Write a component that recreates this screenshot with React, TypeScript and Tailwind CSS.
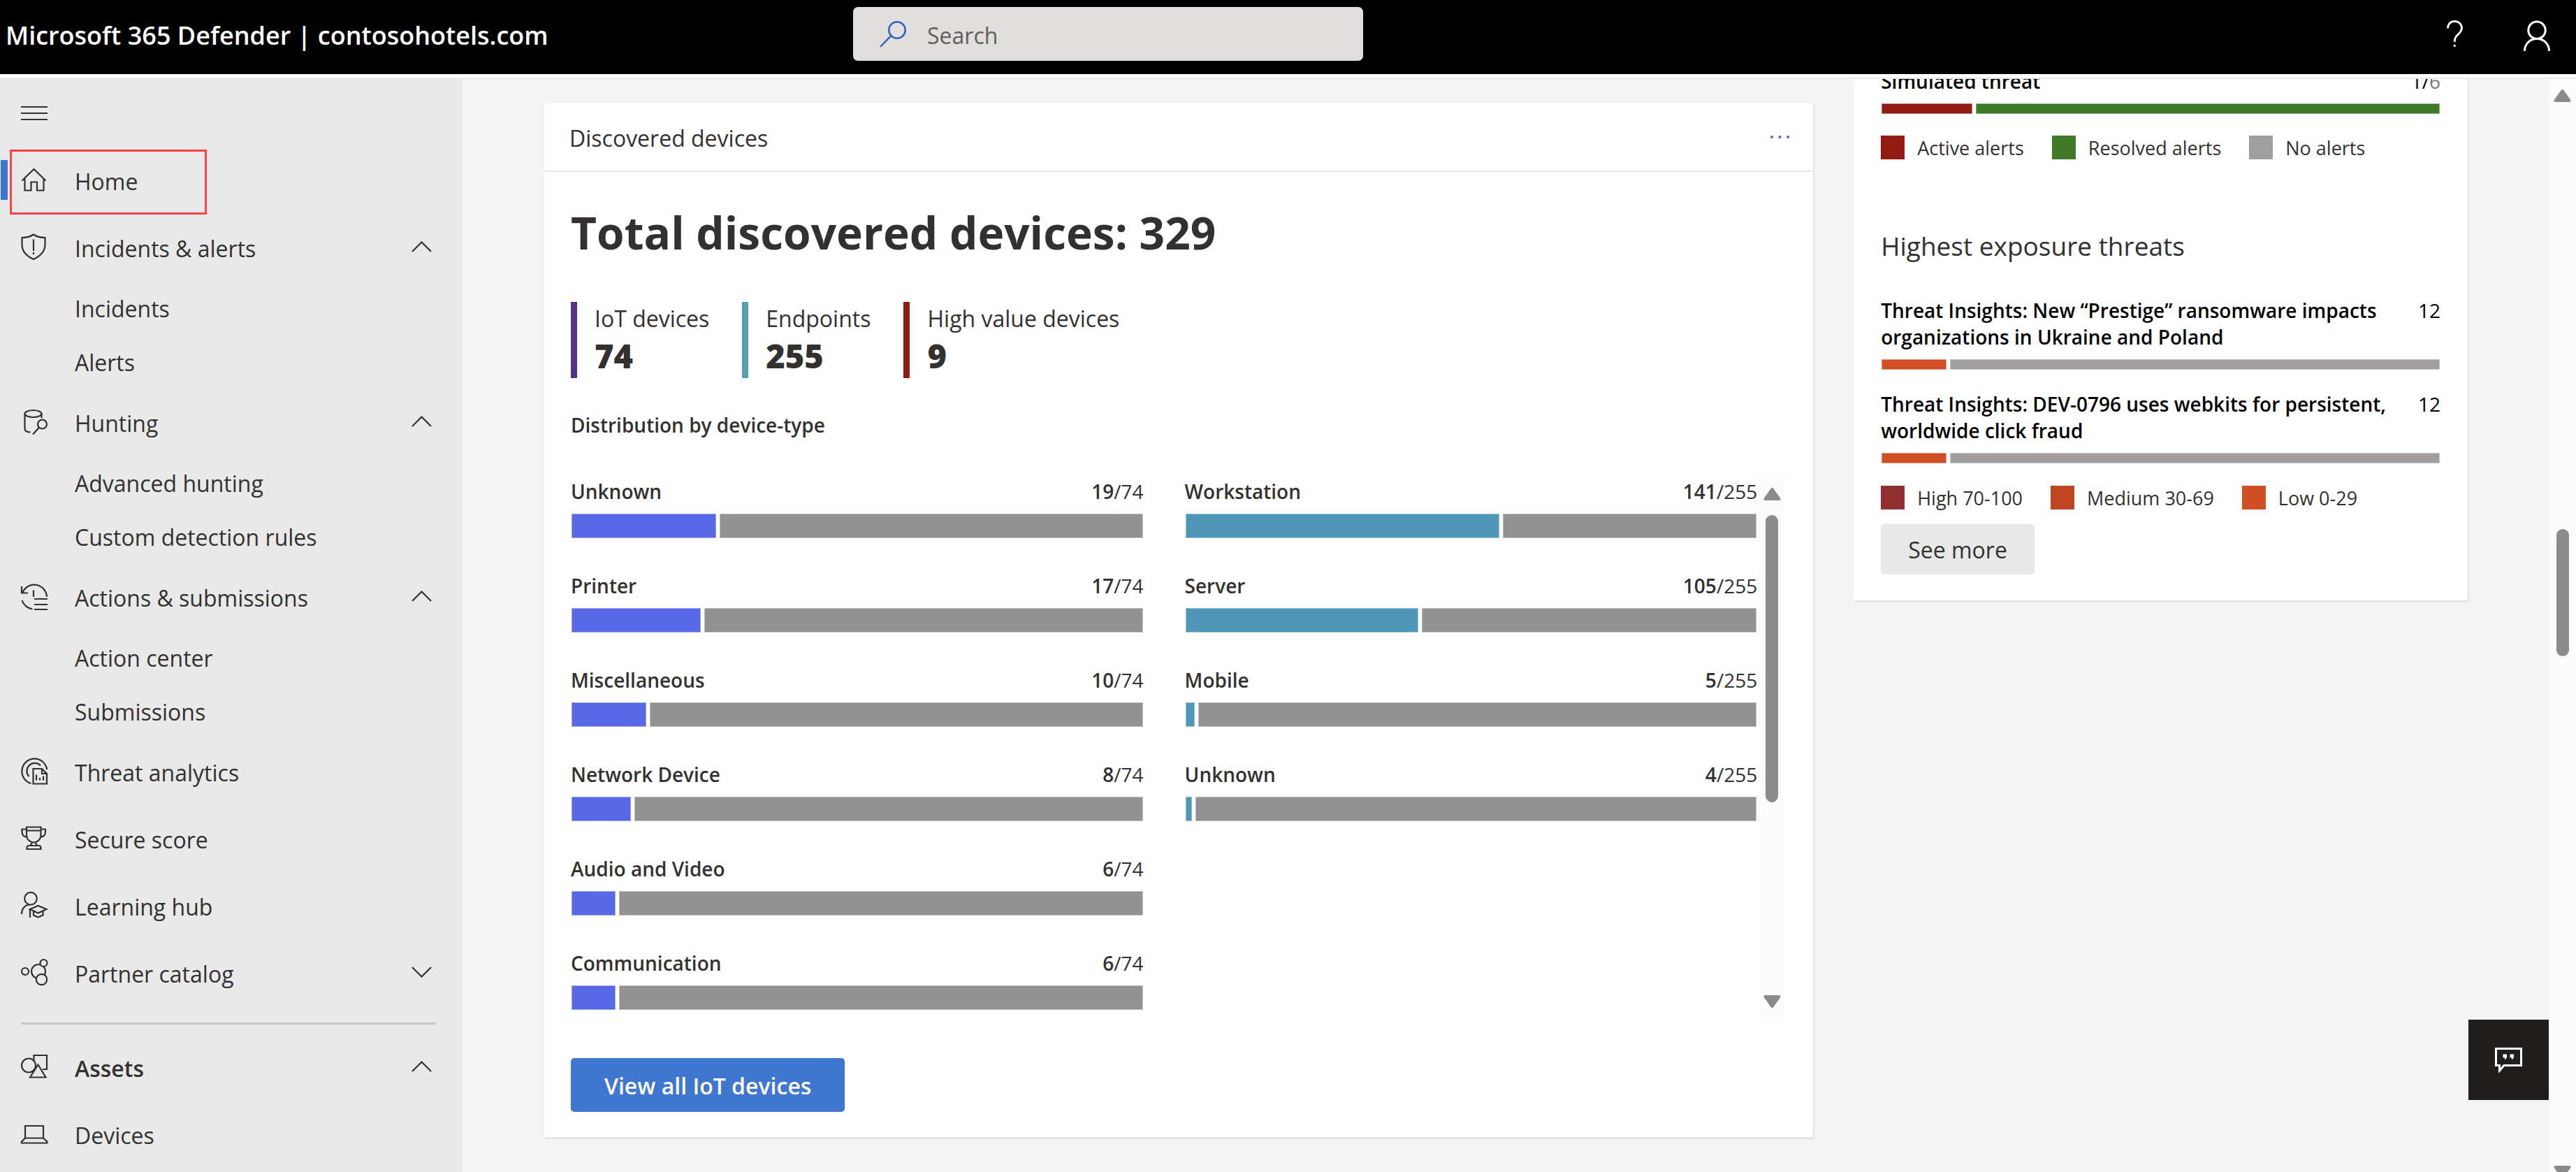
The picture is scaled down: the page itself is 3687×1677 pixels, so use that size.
import { type ReactNode } from 'react'

function Icon({ children }: { children: ReactNode }) {
  return (
    <svg
      viewBox="0 0 38 38"
      className="size-[38px] shrink-0 overflow-visible"
      fill="none"
      stroke="currentColor"
      strokeWidth="2.2"
      aria-hidden="true"
    >
      {children}
    </svg>
  )
}

const icons = {
  home: (
    <Icon>
      <path d="M1.500 19.500 18.500 3l17 16.500M5.500 16v17.500h9v-12h8.500v12h9.500V16" />
    </Icon>
  ),
  shield: (
    <Icon>
      <path d="M18 .5C14 3.500 8 5 1.500 5v10C1.500 25 8 31.500 18 36c9.500-4.500 16.500-11 16.500-21V5C27.500 5 22 3.500 18 .5Z" />
      <path d="M18 7.500v16.500M18 26v3" />
    </Icon>
  ),
  hunting: (
    <Icon>
      <ellipse cx="17.5" cy="7" rx="12" ry="5" />
      <path d="M5.500 7v21.500c0 3 3 4.800 8 5M29.500 7v6" />
      <circle cx="30.5" cy="22" r="6.5" />
      <path d="M26 26.800 17 36.500" />
    </Icon>
  ),
  history: (
    <Icon>
      <path d="M2.500 12.500A18 18 0 0 1 37 19M1 4v9.500h9M1.500 24C3.500 30 9 35.500 16.500 36.500M18 9.500v9.500M19 22h19M19 30h19M19 37h19" />
    </Icon>
  ),
  analytics: (
    <Icon>
      <path d="M14.500 36A18 18 0 1 1 37.200 16M11.500 26A11 11 0 0 1 28 10.500" />
      <path d="M17.500 15H30l7 7v14.500H17.500ZM30 15v7h7M22 23.500v8M27 28v3.500M32 25.500v6" />
    </Icon>
  ),
  trophy: (
    <Icon>
      <path d="M8 2.500h20.500V14a10.250 10.250 0 0 1-20.500 0ZM8 7.500h20.500M8 5.500H1.500V9c0 5 3 7.500 7 7.500M28.500 5.500H35V9c0 5-3 7.500-7 7.500M16 24.500 13.500 29M20.500 24.500 23 29M8.500 34v-2c0-2 1-3 3-3h14c2 0 3 1 3 3v2Z" />
    </Icon>
  ),
  learning: (
    <Icon>
      <circle cx="14" cy="8.7" r="8.8" />
      <path d="M1 31c0-8 5-13.500 12-13.500M13 24l11.500-5 12 5-12 5.500ZM13 24v12M18 27v5.500l6.500 3 7-3V27" />
    </Icon>
  ),
  partner: (
    <Icon>
      <circle cx="6" cy="17" r="5" />
      <circle cx="25" cy="17" r="10" />
      <circle cx="32.5" cy="5" r="5" fill="#e9e9e9" />
      <circle cx="29.5" cy="28.5" r="7.7" fill="#e9e9e9" />
    </Icon>
  ),
  assets: (
    <Icon>
      <path d="M18.500 10V2H37v20h-6" />
      <circle cx="11" cy="16.5" r="10" />
      <path d="m24.500 15.500 11 18H13Z" fill="#e9e9e9" />
    </Icon>
  ),
  laptop: (
    <Icon>
      <path d="M6 7h26v17.500H6ZM6 24.500l-5 5v2h36.500v-2l-5.500-5" />
    </Icon>
  ),
}

function Chevron({ down = false }: { down?: boolean }) {
  return (
    <svg viewBox="0 0 29 16" className="mb-0.5 h-4 w-[29px] shrink-0" fill="none" stroke="currentColor" strokeWidth="2.2" aria-hidden="true">
      <path d={down ? 'M1 1l13.500 13.500L28 1' : 'M1 15 14.500 1.500 28 15'} />
    </svg>
  )
}

type NavEntry = {
  label: string
  icon: ReactNode
  open?: boolean
  children?: string[]
  current?: boolean
  bold?: boolean
}

const primaryNav: NavEntry[] = [
  { label: 'Home', icon: icons.home, current: true },
  { label: 'Incidents & alerts', icon: icons.shield, open: true, children: ['Incidents', 'Alerts'] },
  { label: 'Hunting', icon: icons.hunting, open: true, children: ['Advanced hunting', 'Custom detection rules'] },
  { label: 'Actions & submissions', icon: icons.history, open: true, children: ['Action center', 'Submissions'] },
  { label: 'Threat analytics', icon: icons.analytics },
  { label: 'Secure score', icon: icons.trophy },
  { label: 'Learning hub', icon: icons.learning },
  { label: 'Partner catalog', icon: icons.partner, open: false },
]

const assetNav: NavEntry[] = [
  { label: 'Assets', icon: icons.assets, open: true, bold: true },
  { label: 'Devices', icon: icons.laptop },
]

function NavItem({ entry }: { entry: NavEntry }) {
  const row = 'relative flex h-24 w-full items-center gap-[39px] pr-11 pl-[30px] text-left'
  const label = <span className={entry.bold ? 'flex-1 pt-[3px] font-semibold' : 'flex-1 pt-[3px]'}>{entry.label}</span>
  return (
    <li>
      {entry.open === undefined ? (
        <a href="#" className={row} aria-current={entry.current ? 'page' : undefined}>
          {entry.current && (
            <>
              <span className="absolute top-[19px] left-px h-[57px] w-2.5 bg-[#3f76cf]" />
              <span className="absolute top-1 left-3.5 h-[93px] w-[282px] border-[3px] border-[#fb4447]" />
            </>
          )}
          {entry.icon}
          {label}
        </a>
      ) : (
        <button type="button" className={row} aria-expanded={entry.open}>
          {entry.icon}
          {label}
          <Chevron down={!entry.open} />
        </button>
      )}
      {entry.children && (
        <ul>
          {entry.children.map((c) => (
            <li key={c}>
              <a href="#" className="flex h-[77px] items-center pt-[3px] pl-[107px]">
                {c}
              </a>
            </li>
          ))}
        </ul>
      )}
    </li>
  )
}

function Bar({ share, fill, rest, height }: { share: number; fill: string; rest: string; height: string }) {
  return (
    <div className={`flex gap-[5px] px-px ${height}`}>
      <div className={`shrink-0 border border-white/40 ${fill}`} style={{ width: `calc(${share * 100}% - 3px)` }} />
      <div className={`flex-1 border border-white/40 ${rest}`} />
    </div>
  )
}

function DeviceList({ items, total, fill }: { items: [string, number][]; total: number; fill: string }) {
  return (
    <ul className="flex flex-1 flex-col gap-12">
      {items.map(([name, n]) => (
        <li key={name}>
          <div className="mb-3 flex justify-between text-[28px] leading-10">
            <span className="font-semibold">{name}</span>
            <span>
              <b className="font-semibold">{n}</b>/{total}
            </span>
          </div>
          <Bar share={n / total} fill={fill} rest="bg-[#929292]" height="h-[35px]" />
        </li>
      ))}
    </ul>
  )
}

function Arrow({ down = false }: { down?: boolean }) {
  return (
    <svg viewBox="0 0 25 18" className="h-[18px] w-[25px] shrink-0" fill="#8b8b8b" stroke="#8b8b8b" strokeWidth="4" strokeLinejoin="round" aria-hidden="true">
      <path d={down ? 'M2.500 2h20l-10 14Z' : 'M2.500 16h20l-10-14Z'} />
    </svg>
  )
}

function Stat({ label, value, border }: { label: string; value: number; border: string }) {
  return (
    <div className={`border-l-[9px] pt-0.5 pb-px pl-[25px] ${border}`}>
      <div className="text-[32px] leading-11">{label}</div>
      <div className="text-[47px] leading-[62px] font-extrabold">{value}</div>
    </div>
  )
}

function Legend({ items }: { items: [string, string][] }) {
  return (
    <ul className="flex gap-10 text-[27px] leading-9">
      {items.map(([label, color]) => (
        <li key={label} className="flex gap-[18px]">
          <span className={`size-[34px] ${color}`} />
          {label}
        </li>
      ))}
    </ul>
  )
}

function Threat({ title, score }: { title: string; score: number }) {
  return (
    <div>
      <div className="mb-[13px] flex justify-between gap-10 text-[28px] leading-[38px] text-black">
        <h3 className="font-semibold">{title}</h3>
        <span>{score}</span>
      </div>
      <Bar share={score / 100} fill="bg-[#d14f22]" rest="bg-[#a09f9d]" height="h-[15px]" />
    </div>
  )
}

const cardShadow = 'bg-white shadow-[2px_3px_1px_#e4e4e4]'

export default function App() {
  return (
    <div className="flex h-screen flex-col overflow-hidden bg-white font-['Open_Sans','Noto_Sans',sans-serif] text-[32px] text-[#323130]">
      <header className="mb-[5px] flex h-[106px] shrink-0 items-start bg-black text-white">
        <h1 className="w-[1221px] pl-2 text-[36px] leading-[102px] font-semibold">
          Microsoft 365 Defender | contosohotels.com
        </h1>
        <label className="mt-2.5 flex h-[77px] w-[730px] items-center gap-[30px] rounded-[7px] bg-[#e1dfdd] pl-[38px]">
          <svg viewBox="0 0 38 38" className="size-[38px] shrink-0" fill="none" stroke="#2f62b8" strokeWidth="2.5" aria-hidden="true">
            <circle cx="25" cy="13" r="11.7" />
            <path d="M16.500 21 1 37" />
          </svg>
          <input
            type="search"
            aria-label="Search"
            placeholder="Search"
            className="min-w-0 flex-1 bg-transparent pt-1 outline-none placeholder:text-[#605e5c]"
          />
        </label>
        <div className="ml-auto flex items-start gap-[85px] pt-7 pr-9">
          <button type="button" aria-label="Help">
            <svg viewBox="0 0 24 40" className="h-10 w-6" fill="none" stroke="currentColor" strokeWidth="2.8" aria-hidden="true">
              <path d="M1.500 12.500C1.500 6.500 5.500 2.500 11.200 2.500S21.500 6.500 21.500 12c0 3.500-1.500 5.500-5 9s-5.300 5-5.300 11M11.200 36v3" />
            </svg>
          </button>
          <button type="button" aria-label="Account">
            <svg viewBox="0 0 40 46" className="h-[46px] w-10" fill="none" stroke="currentColor" strokeWidth="3" aria-hidden="true">
              <circle cx="20" cy="15.2" r="12.2" />
              <path d="M2.500 45C2.500 35 10 27.500 20 27.500S37.500 35 37.500 45" />
            </svg>
          </button>
        </div>
      </header>

      <div className="flex min-h-0 flex-1">
        <nav aria-label="Main" className="w-[663px] shrink-0 overflow-hidden border-r border-[#f8f8f8] bg-[#e9e9e9]">
          <button type="button" aria-label="Toggle navigation" className="flex h-[99px] items-center pt-0.5 pl-[30px]">
            <svg viewBox="0 0 38 20" className="h-5 w-[38px]" stroke="currentColor" strokeWidth="2" aria-hidden="true">
              <path d="M0 1h38M0 10h38M0 19h38" />
            </svg>
          </button>
          <ul>
            {primaryNav.map((e) => (
              <NavItem key={e.label} entry={e} />
            ))}
          </ul>
          <hr className="mt-[23px] mr-[38px] mb-[13px] ml-[30px] border-t-[3px] border-[#c8c8c8]" />
          <ul>
            {assetNav.map((e) => (
              <NavItem key={e.label} entry={e} />
            ))}
          </ul>
        </nav>

        <main className="relative flex min-w-0 flex-1 overflow-hidden border-t-2 border-[#e8e8e8] bg-[#f4f4f4]">
          <div className="grid flex-1 grid-cols-[31fr_15fr] items-start gap-x-[58px] px-29">
            <section className={`mt-[35px] ${cardShadow}`}>
              <header className="flex h-[98px] items-center justify-between border-b-2 border-[#e8e8e8] pr-[34px] pl-9">
                <h2 className="pt-[3px]">Discovered devices</h2>
                <button type="button" aria-label="More options">
                  <svg viewBox="0 0 27 4" className="h-1 w-[27px]" fill="#3a6fc8" aria-hidden="true">
                    <circle cx="2" cy="2" r="2" />
                    <circle cx="13.5" cy="2" r="2" />
                    <circle cx="25" cy="2" r="2" />
                  </svg>
                </button>
              </header>
              <div className="px-[38px] pt-[47px] pb-9">
                <p className="text-[64px] leading-20 font-bold">Total discovered devices: 329</p>
                <div className="mt-[59px] flex gap-[47px]">
                  <Stat label="IoT devices" value={74} border="border-[#54308f]" />
                  <Stat label="Endpoints" value={255} border="border-[#56a0ae]" />
                  <Stat label="High value devices" value={9} border="border-[#921c14]" />
                </div>
                <h3 className="mt-[47px] text-[28px] leading-10 font-semibold">Distribution by device-type</h3>
                <div className="mt-[55px] flex h-[774px]">
                  <div className="flex flex-1 items-start gap-[59px]">
                    <DeviceList
                      total={74}
                      fill="bg-[#5968e4]"
                      items={[
                        ['Unknown', 19],
                        ['Printer', 17],
                        ['Miscellaneous', 10],
                        ['Network Device', 8],
                        ['Audio and Video', 6],
                        ['Communication', 6],
                      ]}
                    />
                    <DeviceList
                      total={255}
                      fill="bg-[#4e97b8]"
                      items={[
                        ['Workstation', 141],
                        ['Server', 105],
                        ['Mobile', 5],
                        ['Unknown', 4],
                      ]}
                    />
                  </div>
                  <div className="flex w-[42px] flex-col items-center bg-[#fcfcfc] py-[15px]">
                    <Arrow />
                    <div className="mt-[21px] h-[411px] w-[18px] rounded-full bg-[#8b8b8b]" />
                    <div className="flex-1" />
                    <Arrow down />
                  </div>
                </div>
                <button type="button" className="mt-[57px] h-[77px] rounded-[5px] bg-[#3f76cf] px-12 pt-0.5 font-semibold text-white">
                  View all IoT devices
                </button>
              </div>
            </section>

            <section className={`-mt-10 px-[39px] pt-6 pb-[37px] ${cardShadow}`}>
              <div className="mb-[13px] flex justify-between text-[28px] leading-[38px] text-black">
                <h3 className="font-semibold">Simulated threat</h3>
                <span>
                  1/<span className="text-[#767676]">6</span>
                </span>
              </div>
              <Bar share={1 / 6} fill="bg-[#921c14]" rest="bg-[#3e7a28]" height="h-[15px]" />
              <div className="mt-[31px]">
                <Legend
                  items={[
                    ['Active alerts', 'bg-[#921c14]'],
                    ['Resolved alerts', 'bg-[#3e7a28]'],
                    ['No alerts', 'bg-[#a09f9d]'],
                  ]}
                />
              </div>
              <h2 className="mt-[97px] mb-12 text-[37px] leading-[50px]">Highest exposure threats</h2>
              <div className="flex flex-col gap-[30px]">
                <Threat title="Threat Insights: New “Prestige” ransomware impacts organizations in Ukraine and Poland" score={12} />
                <Threat title="Threat Insights: DEV-0796 uses webkits for persistent, worldwide click fraud" score={12} />
              </div>
              <div className="mt-8">
                <Legend
                  items={[
                    ['High 70-100', 'bg-[#903030]'],
                    ['Medium 30-69', 'bg-[#bf461e]'],
                    ['Low 0-29', 'bg-[#d14f22]'],
                  ]}
                />
              </div>
              <button type="button" className="mt-[19px] h-[72px] rounded-[5px] bg-[#e8e8e8] px-[39px] pt-0.5">
                See more
              </button>
            </section>
          </div>

          <button type="button" aria-label="Feedback" className="absolute right-[39px] bottom-[103px] flex size-[115px] items-center justify-center bg-[#201f1e] text-white">
            <svg viewBox="0 0 39 36" className="h-9 w-[39px]" fill="none" stroke="currentColor" strokeWidth="3" aria-hidden="true">
              <path d="M1.500 1.500h36v24H13L6.500 33v-7.500h-5Z" />
              <path d="M11.500 9.500h5.500v5l-3 3v-3h-2.500ZM21.500 9.500H27v5l-3 3v-3h-2.500Z" fill="currentColor" stroke="none" />
            </svg>
          </button>

          <div className="flex w-[39px] shrink-0 flex-col items-center overflow-hidden bg-[#fcfcfc] pt-[15px]">
            <Arrow />
            <div className="mt-[611px] h-[182px] w-[18px] shrink-0 rounded-full bg-[#8b8b8b]" />
            <div className="flex-1" />
            <div className="h-[9px] shrink-0 overflow-hidden">
              <Arrow down />
            </div>
          </div>
        </main>
      </div>
    </div>
  )
}
